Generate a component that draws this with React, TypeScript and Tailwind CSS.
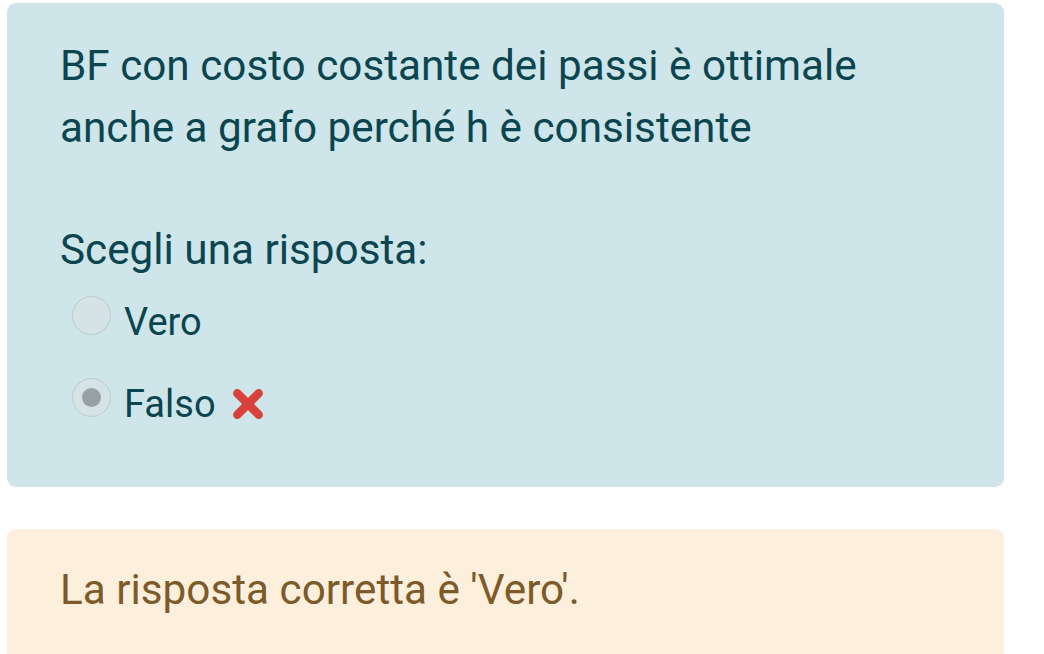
import React from "react";

export default function App() {
  return (
    <div className="w-[1044px] h-[654px] overflow-hidden bg-white font-['Roboto',sans-serif] text-[42.25px] leading-[62px]">
      <div className="pt-[3px] pl-[7px] w-[1004px]">
        <div className="rounded-[9px] bg-[#cee5e9] text-[#0a4550] pl-[53px] pr-[40px] pt-[32px] pb-[52px]">
          <p>BF con costo costante dei passi è ottimale anche a grafo perché h è consistente</p>
          <p className="mt-[60px]">Scegli una risposta:</p>
          <div className="flex flex-col gap-[20px] mt-[10px] pl-[12px] text-[38px]">
            <label className="flex items-center h-[62px]">
              <span className="w-[39px] h-[39px] rounded-full border border-[#bfc9cb] bg-[#d6e3e6] mr-[13px] -mt-[14px] flex items-center justify-center" />
              <span>Vero</span>
            </label>
            <label className="flex items-center h-[62px]">
              <span className="w-[39px] h-[39px] rounded-full border border-[#bfc9cb] bg-[#d6e3e6] mr-[13px] -mt-[14px] flex items-center justify-center">
                <span className="w-[19px] h-[19px] rounded-full bg-[#9aa1a4]" />
              </span>
              <span>Falso</span>
              <svg className="ml-[16px]" width="32" height="32" viewBox="0 0 30 30">
                <path d="M5 5 L25 25 M25 5 L5 25" stroke="#d9413c" strokeWidth="8" strokeLinecap="round" />
              </svg>
            </label>
          </div>
        </div>
        <div className="mt-[42px] rounded-t-[9px] bg-[#fcefdc] text-[#7d5a29] pl-[53px] pt-[30px] h-[200px]">
          <p>La risposta corretta è 'Vero'.</p>
        </div>
      </div>
    </div>
  );
}
